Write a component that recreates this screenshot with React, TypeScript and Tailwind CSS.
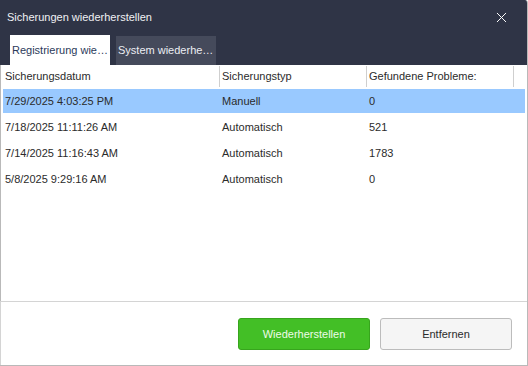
import { X } from "lucide-react";

interface BackupRow {
  date: string;
  type: string;
  problems: string;
}

const rows: BackupRow[] = [
  { date: "7/29/2025 4:03:25 PM", type: "Manuell", problems: "0" },
  { date: "7/18/2025 11:11:26 AM", type: "Automatisch", problems: "521" },
  { date: "7/14/2025 11:16:43 AM", type: "Automatisch", problems: "1783" },
  { date: "5/8/2025 9:29:16 AM", type: "Automatisch", problems: "0" },
];

const font = "font-['Liberation_Sans',Arial,sans-serif]";

export default function App() {
  return (
    <div
      className={`flex h-[366px] w-[528px] flex-col overflow-hidden rounded-tr-[3px] border-r border-b border-[#b9b9b9] bg-white text-[11px] text-[#2b2b2b] ${font}`}
    >
      <div className="flex h-[65px] flex-col bg-[#2f3446]">
        <div className="flex h-[35px] items-center justify-between pl-[7px] pr-[17px]">
          <span className="text-[#f0f1f4]">Sicherungen wiederherstellen</span>
          <X size={17} strokeWidth={1.4} className="text-white" />
        </div>
        <div className="flex flex-1 items-end gap-[6px] pl-[10px]">
          <div className="flex h-[30px] w-[100px] items-center overflow-hidden whitespace-nowrap bg-white pl-[2px] text-[#2b3a5a]">
            Registrierung wie…
          </div>
          <div className="flex h-[29px] w-[100px] items-center overflow-hidden whitespace-nowrap bg-[#454a5b] pl-[2px] text-[#eceef3]">
            System wiederhe…
          </div>
        </div>
      </div>

      <div className="flex flex-1 flex-col border-l border-[#b9b9b9] pl-[2px] pr-[2px]">
        <div className="flex h-[23px] items-center">
          <div className="flex h-[21px] w-[217px] items-center border-r border-[#cfcfcf] pl-[2px]">
            Sicherungsdatum
          </div>
          <div className="flex h-[21px] w-[147px] items-center border-r border-[#cfcfcf] pl-[2px]">
            Sicherungstyp
          </div>
          <div className="flex h-[21px] w-[147px] items-center border-r border-[#cfcfcf] pl-[2px]">
            Gefundene Probleme:
          </div>
        </div>
        {rows.map((row, i) => (
          <div key={row.date} className="h-[26px] py-px">
            <div
              className={`flex h-[24px] items-center ${i === 0 ? "bg-[#99c9ff]" : ""}`}
            >
              <div className="w-[217px] pl-[2px]">{row.date}</div>
              <div className="w-[147px] pl-[2px]">{row.type}</div>
              <div className="pl-[2px]">{row.problems}</div>
            </div>
          </div>
        ))}
        <div className="flex-1" />
      </div>

      <div className="flex h-[64px] items-start justify-end gap-[10px] border-t border-l border-[#d4d4d4] pt-[16px] pr-[15px]">
        <button
          type="button"
          className="h-[32px] w-[132px] rounded-[3px] border border-[#37a51d] bg-[#43bf26] text-[#eefbe9]"
        >
          Wiederherstellen
        </button>
        <button
          type="button"
          className="h-[32px] w-[132px] rounded-[3px] border border-[#bcbcbc] bg-[#f5f5f5] text-[#2b2b2b]"
        >
          Entfernen
        </button>
      </div>
    </div>
  );
}
